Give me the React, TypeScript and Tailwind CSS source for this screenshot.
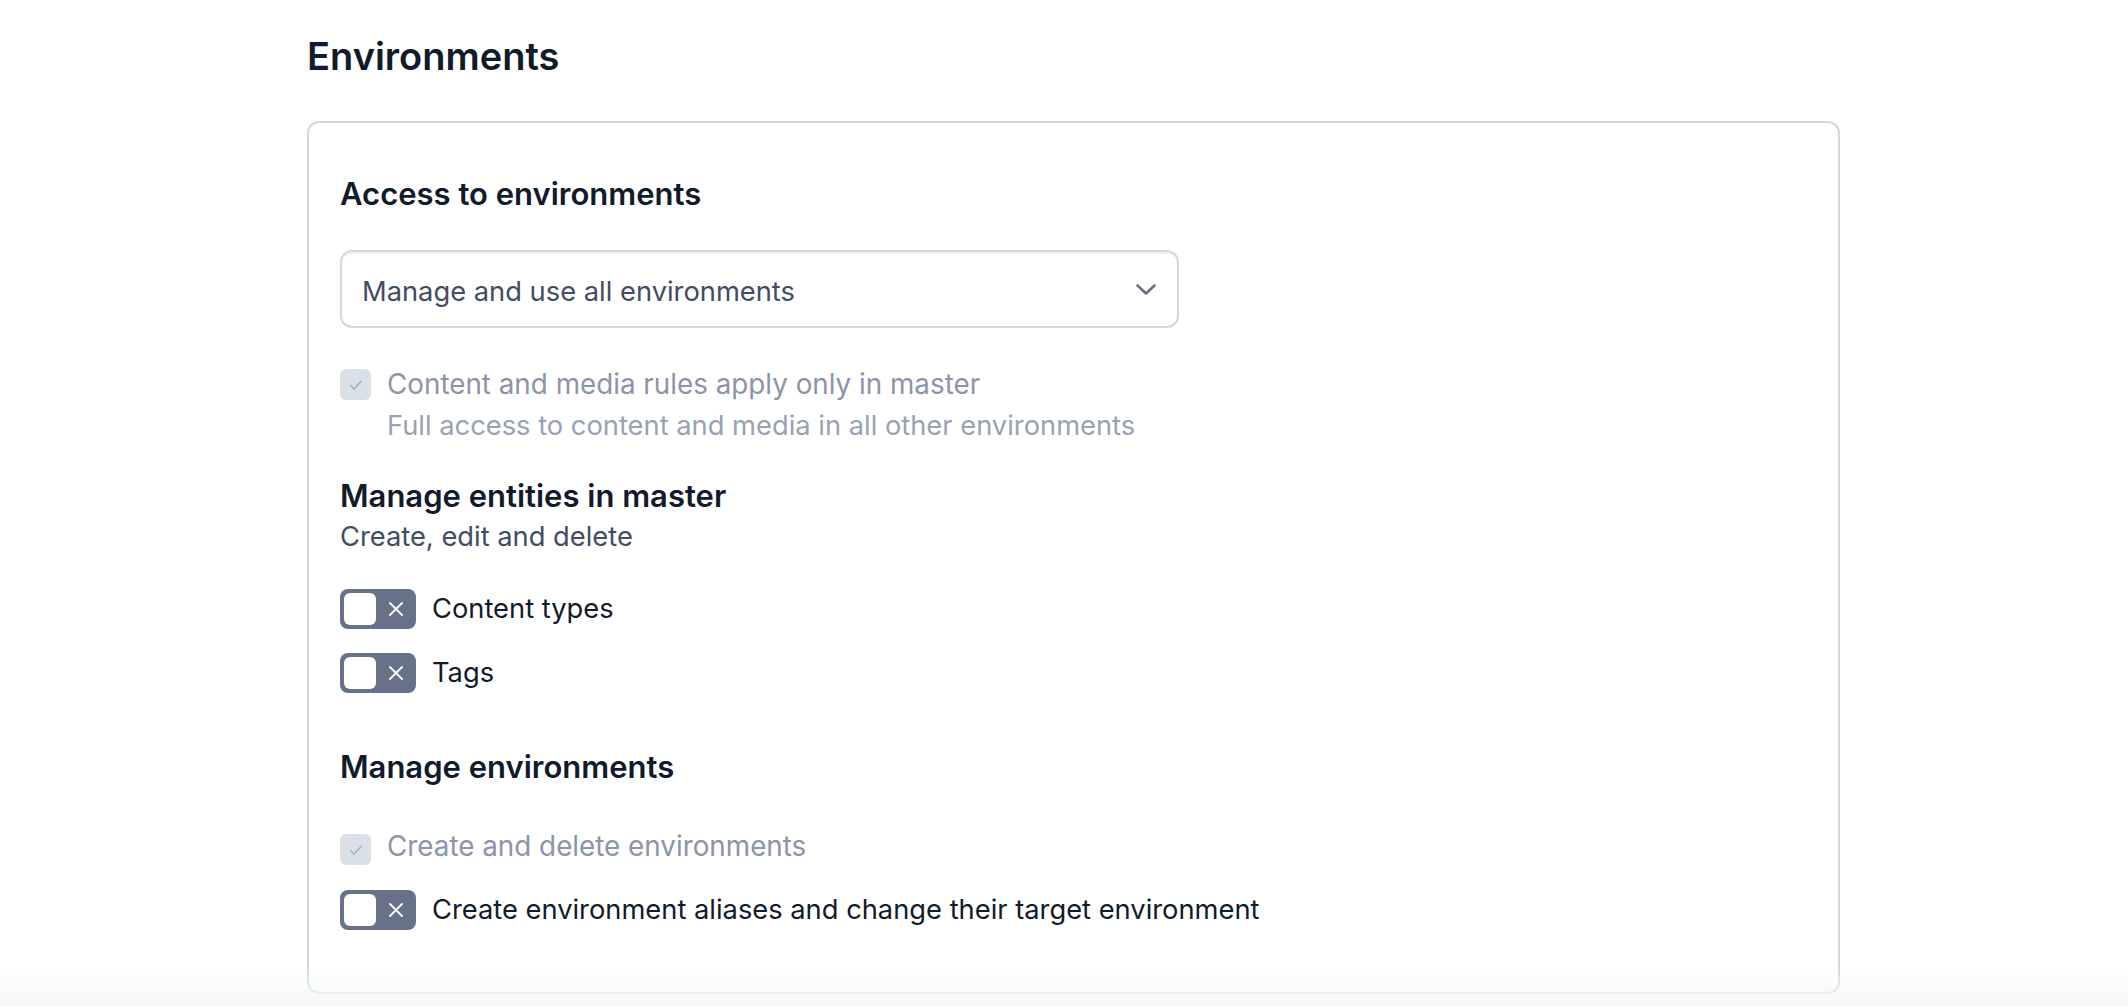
import { useState } from 'react'

const font = { fontFamily: 'Inter, "Noto Sans", "Liberation Sans", sans-serif' }

function Checkbox() {
  return (
    <span className="flex h-[31px] w-[31px] shrink-0 items-center justify-center rounded-[6px] bg-[#d9e0e8]">
      <svg width="16" height="16" viewBox="0 0 16 16" fill="none">
        <path d="M2.5 8.5l3.5 3.5 7.5-8" stroke="#a6b1bf" strokeWidth="1.6" strokeLinecap="round" strokeLinejoin="round" />
      </svg>
    </span>
  )
}

function Toggle({ on, onClick }: { on: boolean; onClick: () => void }) {
  return (
    <button
      onClick={onClick}
      className={`flex h-[40px] w-[76px] shrink-0 items-center rounded-[8px] p-[4px] ${on ? 'bg-[#0059c8] justify-end' : 'bg-[#67728a] justify-start'}`}
    >
      <span className="block h-[32px] w-[32px] rounded-[6px] bg-white" />
      {!on && (
        <svg className="ml-[13px]" width="14" height="14" viewBox="0 0 14 14" fill="none">
          <path d="M1 1l12 12M13 1L1 13" stroke="white" strokeWidth="1.8" strokeLinecap="round" />
        </svg>
      )}
    </button>
  )
}

export default function App() {
  const [toggles, setToggles] = useState({ types: false, tags: false, aliases: false })
  const flip = (k: keyof typeof toggles) => setToggles((s) => ({ ...s, [k]: !s[k] }))

  return (
    <div className="relative min-h-screen bg-white pt-[32px] text-[#111b2b]" style={font}>
      <div className="ml-[307px] w-[1533px]">
        <h2 className="text-[38px] leading-[48px] font-semibold">Environments</h2>

        <div className="mt-[41px] rounded-[12px] border-2 border-[#cfd9e0] pl-[31px] pt-[51px] pb-[62px]">
          <h3 className="text-[31px] leading-[40px] font-semibold">Access to environments</h3>

          <div className="mt-[36px] flex h-[78px] w-[839px] items-center justify-between rounded-[12px] border-2 border-[#cfd9e0] pl-[20px] pr-[21px] pt-[6px] shadow-[inset_0_3px_2px_-1px_rgba(225,228,232,0.6)]">
            <span className="text-[27.3px] leading-[40px] text-[#414d63]">Manage and use all environments</span>
            <svg width="20" height="11" viewBox="0 0 20 11" fill="none" className="-mt-[6px]">
              <path d="M1.5 1.5l8.5 8 8.5-8" stroke="#67728a" strokeWidth="2.6" strokeLinecap="round" strokeLinejoin="round" />
            </svg>
          </div>

          <div className="mt-[35px] flex items-start gap-4">
            <div className="mt-[6px]">
              <Checkbox />
            </div>
            <div className="text-[27.3px] leading-[42px]">
              <p className="text-[27.8px] text-[#8c95a8]">Content and media rules apply only in master</p>
              <p className="text-[#98a2b3]">Full access to content and media in all other environments</p>
            </div>
          </div>

          <h3 className="mt-[31px] text-[31px] leading-[35px] font-semibold">Manage entities in master</h3>
          <p className="mt-[6px] text-[27.3px] leading-[36px] text-[#414d63]">Create, edit and delete</p>

          <div className="mt-[34px] flex flex-col gap-[24px]">
            <label className="flex items-center gap-4">
              <Toggle on={toggles.types} onClick={() => flip('types')} />
              <span className="text-[27.3px] leading-[40px]">Content types</span>
            </label>
            <label className="flex items-center gap-4">
              <Toggle on={toggles.tags} onClick={() => flip('tags')} />
              <span className="text-[27.3px] leading-[40px]">Tags</span>
            </label>
          </div>

          <h3 className="mt-[56px] text-[31px] leading-[35px] font-semibold">Manage environments</h3>

          <div className="mt-[42px] flex items-start gap-4">
            <div className="mt-[8px]">
              <Checkbox />
            </div>
            <span className="text-[27.8px] leading-[40px] text-[#8c95a8]">Create and delete environments</span>
          </div>

          <label className="mt-[24px] flex items-center gap-4">
            <Toggle on={toggles.aliases} onClick={() => flip('aliases')} />
            <span className="text-[27.3px] leading-[40px]">Create environment aliases and change their target environment</span>
          </label>
        </div>
      </div>

      <div className="pointer-events-none fixed inset-x-0 bottom-0 h-[40px] bg-gradient-to-b from-white/0 to-[#f5f7f8]" />
    </div>
  )
}
